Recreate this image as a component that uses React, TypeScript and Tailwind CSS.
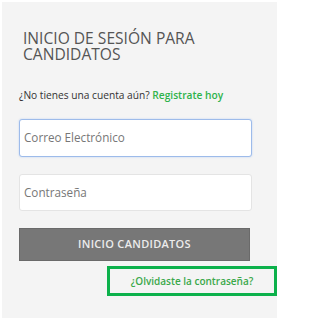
import React from "react";

export default function App() {
  return (
    <div className="w-[284px] h-[320px] bg-white pt-[2px] pl-[2px]" style={{ fontFamily: '"Open Sans", "Liberation Sans", sans-serif' }}>
      <div className="w-[275px] h-[316px] bg-[#f4f4f4] flex flex-col pl-[17px]">
        <h1 className="mt-[28px] ml-[4px] text-[15.6px] leading-[16px] text-[#555555] font-normal">
          INICIO DE SESIÓN PARA
          <br />
          CANDIDATOS
        </h1>
        <p className="mt-[26px] text-[10.2px] leading-[15px] text-[#333333]">
          ¿No tienes una cuenta aún?{" "}
          <span className="font-semibold text-[#2eb34b]">Registrate hoy</span>
        </p>
        <div className="mt-[16px] w-[233px] h-[38px] bg-white rounded-[3px] border border-[#9dbbea] shadow-[0_0_2px_#b8cff2] flex items-center px-[4px]">
          <span className="text-[11.7px] text-[#777777]">Correo Electrónico</span>
        </div>
        <div className="mt-[17px] w-[233px] h-[37px] bg-white rounded-[3px] border border-[#e4e4e4] flex items-center px-[4px]">
          <span className="text-[11.7px] text-[#777777]">Contraseña</span>
        </div>
        <button className="mt-[17px] w-[231px] h-[33px] bg-[#777777] border border-[#6a6a6a] text-[#ececec] text-[11px] font-semibold tracking-[0.3px] flex items-center justify-center">
          INICIO CANDIDATOS
        </button>
        <div className="mt-[5px] ml-[88px] w-[170px] h-[30px] border-[3px] border-[#0cb14b] flex items-center justify-center">
          <span className="text-[10px] font-semibold text-[#3aa84a]">¿Olvidaste la contraseña?</span>
        </div>
      </div>
    </div>
  );
}
